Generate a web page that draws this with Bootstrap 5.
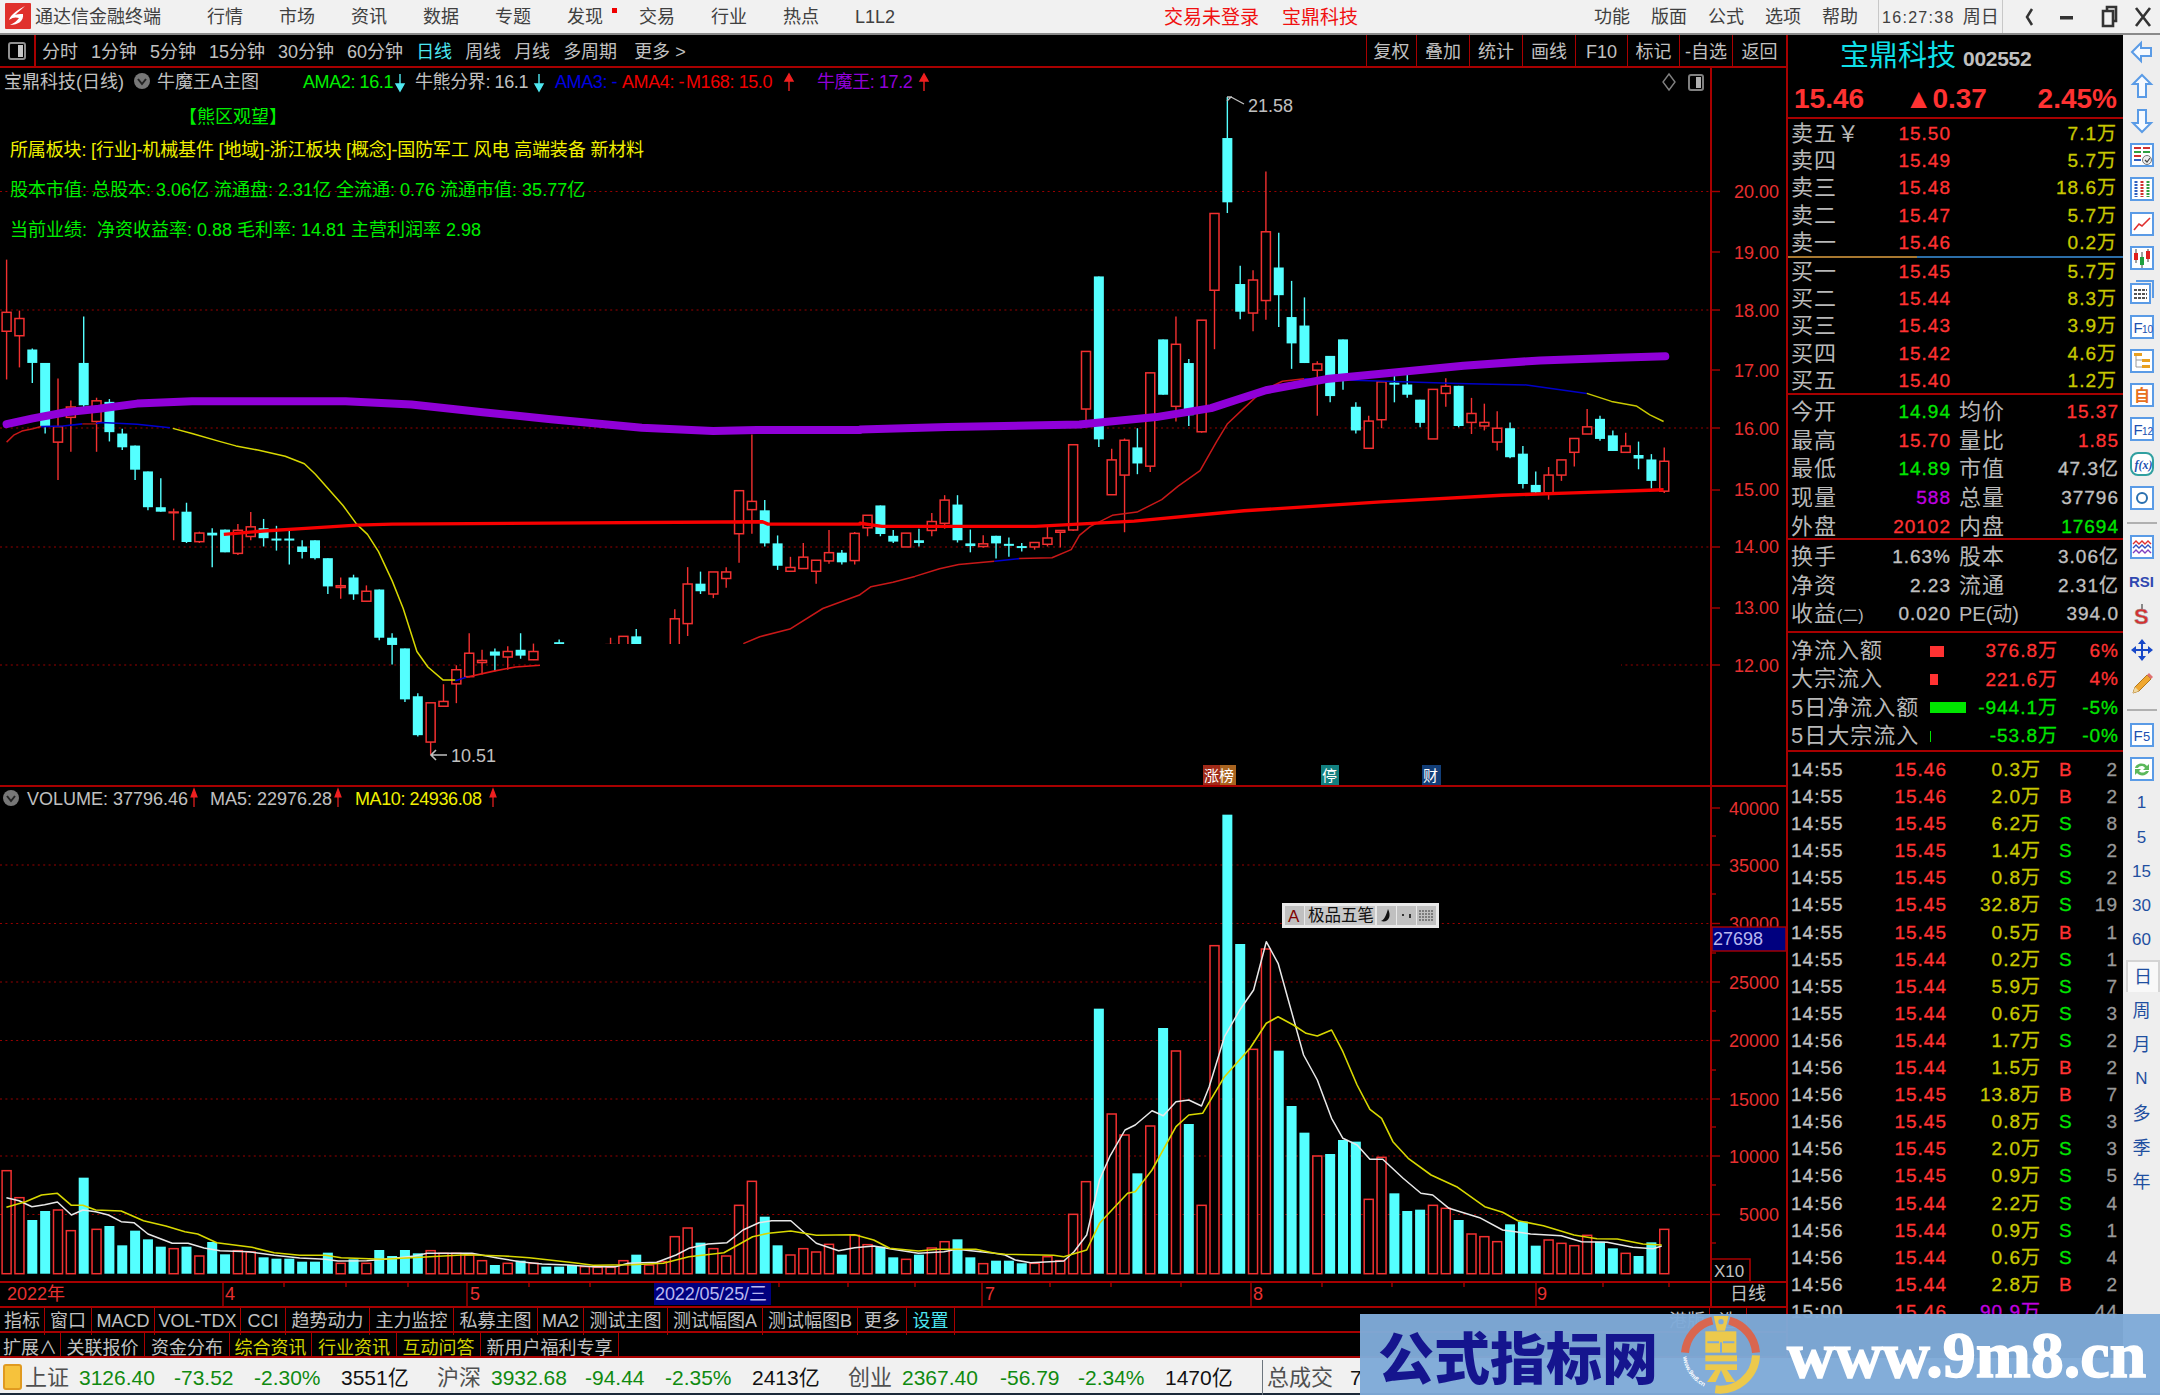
<!DOCTYPE html>
<html lang="zh-CN">
<head>
<meta charset="UTF-8">
<title>通达信金融终端</title>
<link href="https://cdn.jsdelivr.net/npm/bootstrap@5.3.3/dist/css/bootstrap.min.css" rel="stylesheet">
<style>
  body { margin:0; background:#000; font-family:"Liberation Sans","Noto Sans CJK SC",sans-serif; font-size:18px; color:#c0c0c0; }
  .td-app { width:2160px; height:1395px; overflow:hidden; position:relative; }

  /* title bar */
  .td-top { height:35px; background:#f1f1f1; border-bottom:2px solid #8a8a8a; color:#404040; line-height:35px; white-space:nowrap; }
  .td-logo { margin:3px 4px 0 5px; }
  .td-menu { margin-left:46px; gap:36px; }
  .td-menu span { position:relative; }
  .td-dot { position:absolute; left:45px; top:8px; width:5px; height:5px; background:#f00000; }
  .td-login { margin-left:269px; gap:23px; color:#f01010; font-size:19px; }
  .td-sys { gap:21px; margin-right:20px; }
  .td-clock { width:125px; border:solid #c8c8c8; border-width:0 1px; padding-left:3px; }
  .td-clock b { font-weight:400; font-size:16px; letter-spacing:1.3px; margin-right:8px; }
  .td-win { width:157px; }

  .td-mid { height:1323px; }
  .td-left { width:1786px; }

  /* period toolbar */
  .td-bar { height:33px; border-bottom:2px solid #a80000; line-height:35px; white-space:nowrap; }
  .td-switch { width:36px; height:31px; border-right:2px solid #a80000; margin-right:6px; }
  .td-periods { gap:13px; }
  .td-more { margin-left:4px; }
  .td-cyan { color:#4ce6f0; }
  .td-tools { display:grid; grid-template-columns:50px 53px 53px 53px 52px 52px 53px 54px; text-align:center; }
  .td-tools span { border-left:1px solid #a80000; height:31px; }

  .td-chart { display:block; width:1786px; height:1238px; }
  .td-chart text { font-family:"Liberation Sans","Noto Sans CJK SC",sans-serif; font-size:18px; }
  .t-red { fill:#e83030; } .t-gray { fill:#c0c0c0; } .t-green { fill:#00ee00; } .t-yel { fill:#f0f000; }
  .t-blue { fill:#0000e0; } .t-pur { fill:#9000d8; } .t-rr { fill:#f00000; }
  .t-wht { fill:#fff; }
  .t-tight { letter-spacing:-.4px; }
  .t-narrow { letter-spacing:-.15px; }
  .td-grid { stroke:#980000; stroke-width:1.2; stroke-dasharray:2 3.4; }
  .td-rl { stroke:#a80000; stroke-width:2; }

  /* indicator tabs */
  .td-tabs { display:grid; border-top:2px solid #a80000; white-space:nowrap; text-align:center; }
  .td-tabs span { border-right:1px solid #a80000; }
  .td-tabs1 { height:25px; line-height:27px; grid-template-columns:45px 47px 63px 86px 45px 84px 84px 84px 46px 84px 95px 95px 49px 48px 710px 45px 37px; }
  .td-tabs2 { height:27px; line-height:30px; grid-template-columns:61px 84px 85px 82px 85px 84px 138px; border-bottom:2px solid #a80000; }
  .td-ylw { color:#d0d000; }

  /* quote panel */
  .td-quote { width:337px; border-left:2px solid #a80000; overflow:hidden; }
  .td-name { height:45px; padding-left:52px; line-height:42px; white-space:nowrap; }
  .td-name b { font-weight:400; color:#10e0e8; font-size:29px; }
  .td-name i { font-style:normal; font-weight:700; font-size:21px; margin-left:7px; letter-spacing:-.3px; color:#c0c0c0; }
  .td-price { height:39px; border-bottom:2px solid #a80000; padding:0 6px 0 6px; font-weight:700; font-size:28px; line-height:37px; color:#ff3232; }
  .td-price span:nth-child(2) { margin-left:-10px; }
  .td-sec { padding:0 6px 0 3px; }
  .td-lab { font-size:22px; letter-spacing:1px; color:#b8b8b8; }
  .td-lab small { font-size:16px; letter-spacing:0; }
  .td-lab2 { padding-left:8px; }
  .td-pe { font-size:20px; letter-spacing:0; }
  .td-num { font-size:19px; letter-spacing:1px; text-align:right; -webkit-text-stroke:.3px currentColor; }
  .td-depth { display:grid; grid-template-columns:70px 90px 1fr; height:27.2px; line-height:27px; white-space:nowrap; }
  .td-sells { height:137px; padding-top:1px; }
  .td-split { height:2px; background:linear-gradient(90deg,#a87830 0 129px,#2c6ea8 129px); }
  .td-buys { height:137px; border-bottom:2px solid #a80000; }
  .td-stats { display:grid; grid-template-columns:70px 90px 62px 1fr; line-height:28px; white-space:nowrap; }
  .td-s1 { height:145px; border-bottom:2px solid #a80000; grid-auto-rows:28.7px; padding-right:4px; padding-top:3px; overflow:hidden; }
  .td-s2 { height:93px; border-bottom:2px solid #a80000; grid-auto-rows:28.5px; padding-right:4px; padding-top:3px; }
  .td-flow { height:119px; border-bottom:2px solid #a80000; padding:4px 4px 0 3px; display:grid; grid-template-columns:139px 128px 1fr; grid-auto-rows:28.4px; line-height:28px; white-space:nowrap; overflow:hidden; }
  .td-fbar { height:11px; flex:none; }
  .td-ticks { padding:4px 5px 0 3px; }
  .td-tick { display:grid; grid-template-columns:60px 96px 94px 30px 1fr; height:27.1px; line-height:27px; }
  .td-tick div:nth-child(4) { padding-left:18px; font-size:19px; }
  .c-r { color:#ff3232; } .c-g { color:#00e600; } .c-y { color:#c8c800; } .c-w { color:#c0c0c0; } .c-m { color:#c000e0; } .c-d { color:#989898; }

  /* tool strip on the far right */
  .td-side { width:37px; background:#eeeeee; }
  .td-si { height:34.3px; color:#1f4fa0; font-size:17px; line-height:34px; }
  .td-si svg { display:block; }
  .td-cn { font-size:18px; }
  .td-sep { height:2px; width:30px; margin:6.5px auto 6.5px; background:#b0b0b0; }
  .td-sep2 { margin:7px auto 7px; }
  .td-rsi { color:#3048b0; font-size:15px; }
  .td-on { background:#f8f8f8; border:2px solid #d4d4d4; border-bottom:0; margin-left:3px; width:34px; height:32px; margin-top:2px; margin-bottom:2px; line-height:30px; }

  /* index ticker */
  .td-status { height:37px; background:#f1f1f1; border-bottom:2px solid #1c2a3a; color:#505050; line-height:35px; padding-top:3px; white-space:nowrap; display:flex; align-items:center; }
  .td-status span { flex:none; }
  .td-up { font-size:21px; color:#108a10; }
  .td-amt { font-size:21px; color:#111; }
  .td-idx { font-size:22px; color:#505050; }
  .td-oc { width:19px; height:26px; margin:0 3px 0 3px; background:#f6c23c; border:2px solid #e09a20; border-radius:3px; }

  /* site banner lying over the bottom right corner */
  .td-banner { position:absolute; left:1360px; top:1314px; width:800px; height:81px; background:rgba(127,170,216,.97); white-space:nowrap; }
  .td-bn { color:#15158e; font-family:"Noto Sans CJK SC",sans-serif; font-weight:900; font-size:56px; line-height:78px; margin-left:18px; width:285px; flex:none; }
  .td-mark { margin-left:18px; }
  .td-url { color:#fff; font-family:"Liberation Serif",serif; font-weight:700; font-size:66px; line-height:74px; -webkit-text-stroke:1.5px #fff; margin-left:26px; }
</style>
</head>
<body>
<div class="td-app d-flex flex-column">

  <!-- title bar -->
  <div class="td-top d-flex flex-shrink-0">
    <svg class="td-logo flex-shrink-0" width="26" height="26" viewBox="0 0 26 26"><rect width="26" height="26" rx="1" fill="#e0312c"/><path d="M20 3 C13 7 6 11 4 17 C8 14 11 14 14 15 C12 18 9 20 5 22 C13 22 19 18 18 11 C14 11 12 11 10 12 C13 9 17 6 20 3Z" fill="#fff"/></svg>
    <span>通达信金融终端</span>
    <div class="td-menu d-flex">
      <span>行情</span><span>市场</span><span>资讯</span><span>数据</span><span>专题</span>
      <span>发现<i class="td-dot"></i></span><span>交易</span><span>行业</span><span>热点</span><span>L1L2</span>
    </div>
    <div class="td-login d-flex"><span>交易未登录</span><span>宝鼎科技</span></div>
    <div class="td-sys d-flex ms-auto"><span>功能</span><span>版面</span><span>公式</span><span>选项</span><span>帮助</span></div>
    <div class="td-clock flex-shrink-0"><b>16:27:38</b>周日</div>
    <svg class="td-win flex-shrink-0" height="33" viewBox="0 0 157 33"><path d="M29 9 L24 17 L29 25" fill="none" stroke="#333" stroke-width="2.5"/><rect x="57" y="16" width="13" height="3.5" fill="#333"/><path d="M100 11 V26 H110 V11 Z M104 11 V7 H113 V21 H110" fill="none" stroke="#333" stroke-width="2.6"/><path d="M133 8 L147 26 M147 8 L133 26" stroke="#333" stroke-width="2.6"/></svg>
  </div>

  <div class="td-mid d-flex flex-shrink-0">
    <div class="td-left flex-shrink-0">
      <!-- period toolbar -->
      <div class="td-bar d-flex">
        <div class="td-switch d-flex align-items-center justify-content-center flex-shrink-0">
          <svg width="18" height="18" viewBox="0 0 18 18"><rect x="1" y="1" width="16" height="16" rx="2" fill="none" stroke="#909090" stroke-width="2"/><rect x="10" y="3" width="5" height="12" fill="#c8c8c8"/></svg>
        </div>
        <div class="td-periods d-flex">
          <span>分时</span><span>1分钟</span><span>5分钟</span><span>15分钟</span><span>30分钟</span><span>60分钟</span>
          <span class="td-cyan">日线</span><span>周线</span><span>月线</span><span>多周期</span><span class="td-more">更多 &gt;</span>
        </div>
        <div class="td-tools ms-auto">
          <span>复权</span><span>叠加</span><span>统计</span><span>画线</span><span>F10</span><span>标记</span><span>-自选</span><span>返回</span>
        </div>
      </div>

      <!-- chart canvas, coordinates are screen pixels -->
      <svg class="td-chart" viewBox="0 68 1786 1238" xmlns="http://www.w3.org/2000/svg">
        <g id="grid"></g>
        <g id="candles"></g>
        <g id="lines" fill="none" stroke-linejoin="round"></g>
        <rect x="540" y="644" width="1081" height="36" fill="#000"/>
        <g id="bars"></g>
        <g id="vlines" fill="none" stroke-linejoin="round"></g>

        <!-- frame -->
        <line class="td-rl" x1="1711" y1="68" x2="1711" y2="1306"/>
        <line class="td-rl" x1="0" y1="786" x2="1786" y2="786"/>
        <line class="td-rl" x1="0" y1="1282" x2="1786" y2="1282"/>
        <g id="ticks" stroke="#a80000" stroke-width="1.4"></g>

        <!-- main legend -->
        <text x="4" y="88" class="t-gray">宝鼎科技(日线)</text>
        <circle cx="142" cy="81" r="8" fill="#777"/><path d="M138 79 L142 84 L146 79" fill="none" stroke="#222" stroke-width="2"/>
        <text x="157" y="88" class="t-gray">牛魔王A主图</text>
        <text x="303" y="88" class="t-green t-tight">AMA2: 16.1</text>
        <path d="M400 74 V88 M396 84 L400 91 L404 84Z" stroke="#50e8f0" fill="#50e8f0" stroke-width="1.4"/>
        <text x="415" y="88" class="t-gray t-tight">牛熊分界: 16.1</text>
        <path d="M539 74 V88 M535 84 L539 91 L543 84Z" stroke="#50e8f0" fill="#50e8f0" stroke-width="1.4"/>
        <text x="555" y="88" class="t-blue t-tight">AMA3: -</text>
        <text x="622" y="88" class="t-rr t-tight">AMA4: -</text>
        <text x="686" y="88" class="t-rr t-tight">M168: 15.0</text>
        <path d="M789 91 V78 M785 81 L789 74 L793 81Z" stroke="#f02020" fill="#f02020" stroke-width="1.4"/>
        <text x="817" y="88" class="t-pur t-tight">牛魔王: 17.2</text>
        <path d="M924 91 V78 M920 81 L924 74 L928 81Z" stroke="#f02020" fill="#f02020" stroke-width="1.4"/>

        <text x="179" y="123" fill="#00ee00">【熊区观望】</text>
        <text x="10" y="156" class="t-yel t-narrow">所属板块: [行业]-机械基件 [地域]-浙江板块 [概念]-国防军工 风电 高端装备 新材料</text>
        <text x="10" y="196" class="t-green">股本市值: 总股本: 3.06亿 流通盘: 2.31亿 全流通: 0.76 流通市值: 35.77亿</text>
        <text x="10" y="236" class="t-green" xml:space="preserve">当前业绩:  净资收益率: 0.88 毛利率: 14.81 主营利润率 2.98</text>

        <path d="M1669 74 L1675 82 L1669 90 L1663 82Z" fill="none" stroke="#808080" stroke-width="1.4"/>
        <rect x="1689" y="75" width="14" height="15" rx="2" fill="none" stroke="#808080" stroke-width="2"/><rect x="1696" y="77" width="5" height="11" fill="#b0b0b0"/>

        <!-- high and low marks -->
        <path d="M1227 97 H1232 M1227 101 L1231 97 L1244 104" fill="none" stroke="#c0c0c0" stroke-width="1.4"/>
        <text x="1248" y="112" class="t-gray">21.58</text>
        <path d="M447 755 H431 M436 750 L431 755 L436 760" fill="none" stroke="#c0c0c0" stroke-width="1.6"/>
        <text x="451" y="762" class="t-gray">10.51</text>

        <!-- price axis -->
        <g text-anchor="end" class="t-red">
          <text x="1779" y="198">20.00</text><text x="1779" y="259">19.00</text><text x="1779" y="317">18.00</text>
          <text x="1779" y="377">17.00</text><text x="1779" y="435">16.00</text><text x="1779" y="496">15.00</text>
          <text x="1779" y="553">14.00</text><text x="1779" y="614">13.00</text><text x="1779" y="672">12.00</text>
        </g>

        <!-- signal tags -->
        <rect x="1203" y="765" width="33" height="20" fill="#a02a18"/><rect x="1220" y="765" width="16" height="20" fill="#a86420"/>
        <text x="1204" y="781" class="t-wht" style="font-size:15px">涨榜</text>
        <rect x="1321" y="765" width="18" height="20" fill="#128080"/><text x="1322" y="781" class="t-wht" style="font-size:15px">停</text>
        <rect x="1422" y="765" width="19" height="20" fill="#123e78"/><text x="1423" y="781" class="t-wht" style="font-size:15px">财</text>

        <!-- volume legend -->
        <circle cx="11" cy="798" r="8" fill="#777"/><path d="M7 796 L11 801 L15 796" fill="none" stroke="#222" stroke-width="2"/>
        <text x="27" y="805" class="t-gray">VOLUME: 37796.46</text>
        <path d="M194 807 V794 M191 797 L194 789 L197 797Z" stroke="#f02020" fill="#f02020" stroke-width="1.2"/>
        <text x="210" y="805" class="t-gray">MA5: 22976.28</text>
        <path d="M338 807 V794 M335 797 L338 789 L341 797Z" stroke="#f02020" fill="#f02020" stroke-width="1.2"/>
        <text x="355" y="805" class="t-yel t-tight">MA10: 24936.08</text>
        <path d="M493 807 V794 M490 797 L493 789 L496 797Z" stroke="#f02020" fill="#f02020" stroke-width="1.2"/>

        <!-- volume axis -->
        <g text-anchor="end" class="t-red">
          <text x="1779" y="815">40000</text><text x="1779" y="872">35000</text><text x="1779" y="930">30000</text>
          <text x="1779" y="989">25000</text><text x="1779" y="1047">20000</text><text x="1779" y="1106">15000</text>
          <text x="1779" y="1163">10000</text><text x="1779" y="1221">5000</text>
        </g>
        <rect x="1712" y="927" width="74" height="24" fill="#00007f" stroke="#a80000" stroke-width="1.4"/>
        <text x="1713" y="945" fill="#b8b8f0">27698</text>
        <path d="M1711 1259 H1750 V1282" fill="none" stroke="#a80000" stroke-width="1.6"/>
        <text x="1714" y="1277" class="t-gray" style="font-size:17px">X10</text>

        <!-- date axis -->
        <text x="7" y="1300" class="t-red">2022年</text>
        <text x="225" y="1300" class="t-red">4</text>
        <text x="470" y="1300" class="t-red">5</text>
        <rect x="654" y="1283" width="117" height="22" fill="#00007f"/>
        <text x="655" y="1300" fill="#b8b8f0" style="letter-spacing:-.1px">2022/05/25/三</text>
        <text x="985" y="1300" class="t-red">7</text>
        <text x="1253" y="1300" class="t-red">8</text>
        <text x="1537" y="1300" class="t-red">9</text>
        <text x="1730" y="1300" class="t-gray">日线</text>

        <!-- input method bar -->
        <rect x="1282" y="903" width="157" height="25" fill="#e8e8e8"/>
        <rect x="1285" y="906" width="19" height="19" fill="#c0c0c0"/><text x="1288" y="922" fill="#800000" style="font-size:17px">A</text>
        <rect x="1305" y="906" width="70" height="19" fill="#c8c8c8"/><text x="1308" y="921" fill="#111" style="font-size:16.5px">极品五笔</text>
        <rect x="1377" y="906" width="19" height="19" fill="#c0c0c0"/><path d="M1388 909 C1386 915 1385 919 1381 921 C1388 923 1392 917 1388 909Z" fill="#111"/>
        <rect x="1397" y="906" width="19" height="19" fill="#c0c0c0"/><path d="M1403 914 v2 M1410 914 v4" stroke="#111" stroke-width="1.6"/>
        <rect x="1417" y="906" width="19" height="19" fill="#c0c0c0"/><path d="M1419 911 h15 M1419 914 h15 M1419 917 h15 M1419 920 h15" stroke="#666" stroke-width="1.6" stroke-dasharray="2 1"/>
      </svg>

      <div class="td-tabs td-tabs1">
        <span>指标</span><span>窗口</span><span>MACD</span><span>VOL-TDX</span><span>CCI</span><span>趋势动力</span><span>主力监控</span><span>私募主图</span><span>MA2</span><span>测试主图</span><span>测试幅图A</span><span>测试幅图B</span><span>更多</span><span class="td-cyan">设置</span><span class="border-0"></span><span>港版</span><span>选</span>
      </div>
      <div class="td-tabs td-tabs2">
        <span>扩展∧</span><span>关联报价</span><span>资金分布</span><span class="td-ylw">综合资讯</span><span class="td-ylw">行业资讯</span><span class="td-ylw">互动问答</span><span>新用户福利专享</span>
      </div>
    </div>

    <!-- quote panel -->
    <div class="td-quote flex-shrink-0">
      <div class="td-name"><b>宝鼎科技</b><i>002552</i></div>
      <div class="td-price d-flex justify-content-between"><span>15.46</span><span>▲0.37</span><span>2.45%</span></div>

      <div class="td-sec td-sells">
        <div class="td-depth"><div class="td-lab">卖五￥</div><div class="td-num c-r">15.50</div><div class="td-num c-y">7.1万</div></div>
        <div class="td-depth"><div class="td-lab">卖四</div><div class="td-num c-r">15.49</div><div class="td-num c-y">5.7万</div></div>
        <div class="td-depth"><div class="td-lab">卖三</div><div class="td-num c-r">15.48</div><div class="td-num c-y">18.6万</div></div>
        <div class="td-depth"><div class="td-lab">卖二</div><div class="td-num c-r">15.47</div><div class="td-num c-y">5.7万</div></div>
        <div class="td-depth"><div class="td-lab">卖一</div><div class="td-num c-r">15.46</div><div class="td-num c-y">0.2万</div></div>
      </div>
      <div class="td-split"></div>
      <div class="td-sec td-buys">
        <div class="td-depth"><div class="td-lab">买一</div><div class="td-num c-r">15.45</div><div class="td-num c-y">5.7万</div></div>
        <div class="td-depth"><div class="td-lab">买二</div><div class="td-num c-r">15.44</div><div class="td-num c-y">8.3万</div></div>
        <div class="td-depth"><div class="td-lab">买三</div><div class="td-num c-r">15.43</div><div class="td-num c-y">3.9万</div></div>
        <div class="td-depth"><div class="td-lab">买四</div><div class="td-num c-r">15.42</div><div class="td-num c-y">4.6万</div></div>
        <div class="td-depth"><div class="td-lab">买五</div><div class="td-num c-r">15.40</div><div class="td-num c-y">1.2万</div></div>
      </div>

      <div class="td-sec td-stats td-s1">
        <div class="td-lab">今开</div><div class="td-num c-g">14.94</div><div class="td-lab td-lab2">均价</div><div class="td-num c-r">15.37</div>
        <div class="td-lab">最高</div><div class="td-num c-r">15.70</div><div class="td-lab td-lab2">量比</div><div class="td-num c-r">1.85</div>
        <div class="td-lab">最低</div><div class="td-num c-g">14.89</div><div class="td-lab td-lab2">市值</div><div class="td-num c-w">47.3亿</div>
        <div class="td-lab">现量</div><div class="td-num c-m">588</div><div class="td-lab td-lab2">总量</div><div class="td-num c-w">37796</div>
        <div class="td-lab">外盘</div><div class="td-num c-r">20102</div><div class="td-lab td-lab2">内盘</div><div class="td-num c-g">17694</div>
      </div>
      <div class="td-sec td-stats td-s2">
        <div class="td-lab">换手</div><div class="td-num c-w">1.63%</div><div class="td-lab td-lab2">股本</div><div class="td-num c-w">3.06亿</div>
        <div class="td-lab">净资</div><div class="td-num c-w">2.23</div><div class="td-lab td-lab2">流通</div><div class="td-num c-w">2.31亿</div>
        <div class="td-lab">收益<small>(二)</small></div><div class="td-num c-w">0.020</div><div class="td-lab td-lab2 td-pe">PE(动)</div><div class="td-num c-w">394.0</div>
      </div>
      <div class="td-flow">
        <div class="td-lab">净流入额</div><div class="td-num c-r d-flex align-items-center justify-content-between"><i class="td-fbar" style="width:14px;background:#ff3232"></i><span>376.8万</span></div><div class="td-num c-r">6%</div>
        <div class="td-lab">大宗流入</div><div class="td-num c-r d-flex align-items-center justify-content-between"><i class="td-fbar" style="width:8px;background:#ff3232"></i><span>221.6万</span></div><div class="td-num c-r">4%</div>
        <div class="td-lab">5日净流入额</div><div class="td-num c-g d-flex align-items-center justify-content-between"><i class="td-fbar" style="width:36px;background:#00e600"></i><span>-944.1万</span></div><div class="td-num c-g">-5%</div>
        <div class="td-lab">5日大宗流入</div><div class="td-num c-g d-flex align-items-center justify-content-between"><i class="td-fbar" style="width:1px;background:#00e600"></i><span>-53.8万</span></div><div class="td-num c-g">-0%</div>
      </div>
      <div class="td-ticks" id="tickList"></div>
    </div>

    <!-- tool strip -->
    <div class="td-side flex-shrink-0 text-center">
      <div class="td-si d-flex align-items-center justify-content-center"><svg width="24" height="24" viewBox="0 0 24 24"><path d="M2 12 L11 3 V8 H21 V16 H11 V21Z" fill="#f6faff" stroke="#5a9be6" stroke-width="2"/></svg></div>
      <div class="td-si d-flex align-items-center justify-content-center"><svg width="24" height="26" viewBox="0 0 24 26"><path d="M12 2 L21 11 H16 V24 H8 V11 H3Z" fill="#f6faff" stroke="#5a9be6" stroke-width="2"/></svg></div>
      <div class="td-si d-flex align-items-center justify-content-center"><svg width="24" height="26" viewBox="0 0 24 26"><path d="M12 24 L21 15 H16 V2 H8 V15 H3Z" fill="#f6faff" stroke="#5a9be6" stroke-width="2"/></svg></div>
      <div class="td-si d-flex align-items-center justify-content-center"><svg width="24" height="24" viewBox="0 0 24 24"><rect x="1" y="1" width="22" height="22" fill="#fff" stroke="#5a9be6" stroke-width="2"/><path d="M4 5h7M13 5h7" stroke="#d03030" stroke-width="2"/><path d="M4 9h7M13 9h7" stroke="#30a040" stroke-width="2"/><path d="M4 13h7" stroke="#d03030" stroke-width="2"/><path d="M4 17h7" stroke="#3060c0" stroke-width="2"/><circle cx="17" cy="17" r="4.5" fill="#eee" stroke="#777"/><path d="M15 17l2 2 3-4" fill="none" stroke="#444" stroke-width="1.2"/></svg></div>
      <div class="td-si d-flex align-items-center justify-content-center"><svg width="24" height="24" viewBox="0 0 24 24"><rect x="1" y="1" width="22" height="22" fill="#fff" stroke="#5a9be6" stroke-width="2"/><path d="M6 4v16" stroke="#3060c0" stroke-width="3" stroke-dasharray="2 1"/><path d="M12 4v16" stroke="#d03030" stroke-width="3" stroke-dasharray="2 1"/><path d="M18 4v16" stroke="#30a040" stroke-width="3" stroke-dasharray="2 1"/></svg></div>
      <div class="td-si d-flex align-items-center justify-content-center"><svg width="24" height="24" viewBox="0 0 24 24"><rect x="1" y="1" width="22" height="22" fill="#fff" stroke="#5a9be6" stroke-width="2"/><path d="M4 18 L9 12 L12 14 L20 6" fill="none" stroke="#e03030" stroke-width="1.6"/></svg></div>
      <div class="td-si d-flex align-items-center justify-content-center"><svg width="24" height="24" viewBox="0 0 24 24"><rect x="1" y="1" width="22" height="22" fill="#fff" stroke="#5a9be6" stroke-width="2"/><path d="M6 3v14M12 6v16M18 3v13" stroke="#444"/><rect x="4" y="7" width="4" height="7" fill="#e02020"/><rect x="10" y="11" width="4" height="8" fill="#20a040"/><rect x="16" y="5" width="4" height="8" fill="#e02020"/></svg></div>
      <div class="td-si d-flex align-items-center justify-content-center"><svg width="24" height="24" viewBox="0 0 24 24"><path d="M6 1H23V18" fill="none" stroke="#5a9be6" stroke-width="2"/><rect x="1" y="4" width="19" height="19" fill="#fff" stroke="#5a9be6" stroke-width="2"/><path d="M4 10h13M4 14h13M4 18h13" stroke="#555" stroke-width="2" stroke-dasharray="3 1"/></svg></div>
      <div class="td-si d-flex align-items-center justify-content-center"><svg width="24" height="24" viewBox="0 0 24 24"><rect x="1" y="1" width="22" height="22" fill="#fff" stroke="#5a9be6" stroke-width="2"/><text x="3.5" y="18" font-family="Liberation Sans" font-size="15" fill="#2050b0">F</text><text x="12" y="18" font-family="Liberation Sans" font-size="10" fill="#2050b0">10</text></svg></div>
      <div class="td-si d-flex align-items-center justify-content-center"><svg width="24" height="24" viewBox="0 0 24 24"><rect x="1" y="1" width="22" height="22" fill="#fff" stroke="#5a9be6" stroke-width="2"/><rect x="4" y="4" width="8" height="3" fill="#e8a020"/><rect x="12" y="10" width="8" height="3" fill="#e8a020"/><rect x="12" y="16" width="8" height="3" fill="#e8a020"/><path d="M6 7V18H12M6 11H12" fill="none" stroke="#999"/></svg></div>
      <div class="td-si d-flex align-items-center justify-content-center"><svg width="24" height="24" viewBox="0 0 24 24"><rect x="1" y="1" width="22" height="22" fill="#fff" stroke="#5a9be6" stroke-width="2"/><text x="4" y="18" font-family="Noto Sans CJK SC" font-weight="700" font-size="16" fill="#e87020">自</text></svg></div>
      <div class="td-si d-flex align-items-center justify-content-center"><svg width="24" height="24" viewBox="0 0 24 24"><rect x="1" y="1" width="22" height="22" fill="#fff" stroke="#5a9be6" stroke-width="2"/><text x="3.5" y="18" font-family="Liberation Sans" font-size="15" fill="#2050b0">F</text><text x="12" y="18" font-family="Liberation Sans" font-size="10" fill="#2050b0">12</text></svg></div>
      <div class="td-si d-flex align-items-center justify-content-center"><svg width="24" height="24" viewBox="0 0 24 24"><rect x="1" y="1" width="22" height="22" rx="7" fill="#fff" stroke="#30a0a0" stroke-width="2"/><text x="4.5" y="17" font-family="Liberation Serif" font-style="italic" font-weight="700" font-size="12" fill="#2050b0">f(x)</text></svg></div>
      <div class="td-si d-flex align-items-center justify-content-center"><svg width="24" height="24" viewBox="0 0 24 24"><rect x="1" y="1" width="22" height="22" fill="#fff" stroke="#5a9be6" stroke-width="2"/><circle cx="12" cy="12" r="5" fill="none" stroke="#2a70b0" stroke-width="2"/></svg></div>
      <div class="td-sep"></div>
      <div class="td-si d-flex align-items-center justify-content-center"><svg width="24" height="24" viewBox="0 0 24 24"><rect x="1" y="1" width="22" height="22" fill="#fff" stroke="#5a9be6" stroke-width="2"/><path d="M3 9l3-3 3 3 3-3 3 3 3-3 3 3" fill="none" stroke="#e03030" stroke-width="1.4"/><path d="M3 13l3-3 3 3 3-3 3 3 3-3 3 3" fill="none" stroke="#3050c0" stroke-width="1.4"/><path d="M3 18l3-3 3 3 3-3 3 3 3-3 3 3" fill="none" stroke="#8040c0" stroke-width="1.4"/></svg></div>
      <div class="td-si td-rsi d-flex align-items-center justify-content-center fw-bold">RSI</div>
      <div class="td-si d-flex align-items-center justify-content-center"><svg width="24" height="26" viewBox="0 0 24 26"><text x="4" y="21" font-family="Liberation Sans" font-weight="700" font-size="22" fill="#d83030" stroke="#999" stroke-width=".5">S</text><path d="M12 1v5" stroke="#888" stroke-width="2"/></svg></div>
      <div class="td-si d-flex align-items-center justify-content-center"><svg width="24" height="24" viewBox="0 0 24 24"><path d="M12 1l4 5h-3v5h5V8l5 4-5 4v-3h-5v5h3l-4 5-4-5h3v-5H6v3l-5-4 5-4v3h5V6H8z" fill="#1848c8"/></svg></div>
      <div class="td-si d-flex align-items-center justify-content-center"><svg width="24" height="24" viewBox="0 0 24 24"><path d="M3 21 L5 15 L17 3 L21 7 L9 19Z" fill="#f0a830" stroke="#b07820"/><path d="M3 21 L5 15 L9 19Z" fill="#f0d8a0"/><path d="M17 3 L21 7 L23 5 L19 1Z" fill="#e07070"/></svg></div>
      <div class="td-sep td-sep2"></div>
      <div class="td-si d-flex align-items-center justify-content-center"><svg width="24" height="24" viewBox="0 0 24 24"><rect x="1" y="1" width="22" height="22" fill="#fff" stroke="#5a9be6" stroke-width="2"/><text x="3.5" y="18" font-family="Liberation Sans" font-size="15" fill="#2050b0">F</text><text x="13" y="18" font-family="Liberation Sans" font-size="13" fill="#2050b0">5</text></svg></div>
      <div class="td-si d-flex align-items-center justify-content-center"><svg width="24" height="24" viewBox="0 0 24 24"><rect x="1" y="1" width="22" height="22" fill="#fff" stroke="#5a9be6" stroke-width="2"/><path d="M5 11 C6 6 14 5 17 9 L19 7 V13 H13 L15 11 C13 8 9 9 8 11Z M19 14 C17 19 10 20 7 16 L5 18 V12 H11 L9 14 C11 16 14 16 16 14Z" fill="#5cb85c"/></svg></div>
      <div class="td-si">1</div><div class="td-si">5</div><div class="td-si">15</div><div class="td-si">30</div><div class="td-si">60</div>
      <div class="td-si td-cn td-on">日</div>
      <div class="td-si td-cn">周</div><div class="td-si td-cn">月</div><div class="td-si">N</div><div class="td-si td-cn">多</div><div class="td-si td-cn">季</div><div class="td-si td-cn">年</div>
    </div>
  </div>

  <!-- index ticker -->
  <div class="td-status flex-shrink-0">
    <span class="td-oc"></span><span class="td-idx" style="width:54px">上证</span>
    <span class="td-up" style="width:95px">3126.40</span><span class="td-up" style="width:80px">-73.52</span><span class="td-up" style="width:87px">-2.30%</span><span class="td-amt" style="width:96px">3551亿</span>
    <span class="td-idx" style="width:54px">沪深</span><span class="td-up" style="width:94px">3932.68</span><span class="td-up" style="width:80px">-94.44</span><span class="td-up" style="width:87px">-2.35%</span><span class="td-amt" style="width:96px">2413亿</span>
    <span class="td-idx" style="width:54px">创业</span><span class="td-up" style="width:98px">2367.40</span><span class="td-up" style="width:78px">-56.79</span><span class="td-up" style="width:87px">-2.34%</span><span class="td-amt" style="width:97px">1470亿</span>
    <span class="td-idx border-start border-secondary ps-1" style="width:88px">总成交</span><span class="td-amt">7</span>
  </div>

  <!-- site banner -->
  <div class="td-banner d-flex align-items-center">
    <span class="td-bn">公式指标网</span>
    <svg class="td-mark flex-shrink-0 align-self-start" width="80" height="81" viewBox="62 12 240 243">
      <path d="M74 128 A108 108 0 0 1 156 32" fill="none" stroke="#d9664f" stroke-width="24"/>
      <path d="M207 32 A108 108 0 0 1 287 128" fill="none" stroke="#d9664f" stroke-width="24"/>
      <path d="M287 136 A108 108 0 0 1 165 238" fill="none" stroke="#ecc94c" stroke-width="24"/>
      <path id="wmArc" d="M68 140 A115 115 0 0 0 160 240" fill="none"/>
      <text font-size="19" fill="#fff" font-family="Liberation Sans" font-weight="700"><textPath href="#wmArc">www.9m8.cn</textPath></text>
      <path d="M160 18 H205 L194 62 H170Z" fill="#ecc94c"/><circle cx="182" cy="35" r="8" fill="#7faad8"/>
      <rect x="135" y="64" width="93" height="64" fill="#ecc94c"/>
      <path d="M141 97 H176 M188 97 H222 M182 97 V128" stroke="#7faad8" stroke-width="6"/>
      <rect x="135" y="136" width="95" height="18" fill="#ecc94c"/>
      <rect x="135" y="163" width="95" height="17" fill="#ecc94c"/>
      <path d="M165 180 L140 216 H166 L182 180 L198 216 H225 L200 180Z" fill="#ecc94c"/>
    </svg>
    <span class="td-url">www.9m8.cn</span>
  </div>
</div>

<script>
  // price candles, read off the picture: [index, type, body top, body bottom, high, low]
  const left = [
    [0,'r',210,265,57,405],[1,'r',228,278,205,370],[2,'c',318,357,315,415],[3,'c',357,542,357,562],
    [4,'r',542,587,402,697],[5,'r',485,515,466,615],[6,'c',357,480,222,490],[7,'r',467,527,458,615],
    [8,'c',470,558,462,585],[9,'c',562,602,548,610],[10,'c',597,667,597,697],[11,'c',672,776,672,785],
    [12,'c',776,789,692,789],[13,'r',790,792,780,872],[14,'c',789,877,763,880],[15,'r',851,876,847,880],
    [16,'c',850,858,837,950],[17,'c',841,907,841,907],[18,'r',843,910,825,915],[19,'r',833,861,790,872],
    [20,'c',837,866,810,890],[21,'c',867,871,830,902],[22,'c',867,871,845,942],[23,'c',890,906,872,925],
    [24,'c',872,924,872,928],[25,'c',924,1006,924,1028],[26,'r',1004,1009,980,1042],[27,'c',980,1029,972,1045],
    [28,'r',1020,1049,1003,1050],[29,'c',1015,1155,1015,1162],[30,'c',1155,1176,1142,1233],[31,'c',1186,1334,1186,1342],
    [32,'c',1325,1438,1316,1442],[33,'r',1344,1458,1344,1495],[34,'r',1340,1354,1290,1354],[35,'r',1248,1289,1235,1345],
    [36,'r',1200,1268,1142,1270],[37,'r',1221,1227,1190,1262],[38,'c',1195,1207,1186,1252],[39,'r',1195,1211,1180,1248],
    [40,'c',1190,1207,1142,1216],[41,'r',1195,1219,1172,1220],[43,'c',1168,1200,1160,1200],[47,'r',1175,1200,1155,1200],
    [48,'r',1151,1200,1151,1200],[49,'c',1151,1200,1130,1200],[52,'r',1100,1200,1072,1200],[53,'r',999,1114,950,1150],
    [54,'c',998,1020,963,1028],[55,'r',964,1028,964,1040],[56,'r',964,983,950,1010],[57,'r',728,853,728,937],
    [58,'r',759,783,565,853],[59,'c',785,881,755,890],[60,'c',881,946,858,958],[61,'r',951,962,920,962],
    [62,'r',921,954,880,954],[63,'r',930,962,930,998],[64,'r',908,932,842,940],[65,'c',908,936,900,942],
    [66,'r',852,931,848,942]
  ];
  const right = [
    [67,'r',975,1003,975,1022],[68,'c',953,1017,953,1022],[69,'c',1021,1034,1008,1037],[70,'r',1015,1046,1015,1046],
    [71,'c',1031,1037,1005,1045],[72,'r',989,1009,970,1022],[73,'r',941,993,930,1005],[74,'c',951,1031,930,1036],
    [75,'c',1038,1044,1007,1058],[76,'r',1039,1045,1020,1048],[77,'c',1021,1038,1021,1072],[78,'c',1039,1043,1025,1068],
    [79,'c',1044,1046,1037,1056],[80,'r',1036,1046,1036,1052],[81,'r',1026,1040,1000,1045],[82,'r',1009,1013,1009,1047],
    [83,'r',817,1008,817,1010],[84,'r',608,737,608,770],[85,'c',440,805,440,822],[86,'r',851,929,826,929],
    [87,'r',807,885,803,1013],[88,'c',823,859,780,883],[89,'r',656,865,656,878],[90,'c',581,705,581,705],
    [91,'r',592,731,530,765],[92,'c',634,751,625,775],[93,'r',538,788,538,790],[94,'r',299,471,299,603],
    [95,'c',130,274,38,298],[96,'c',457,519,416,536],[97,'r',448,522,426,563],[98,'r',340,494,205,537],
    [99,'c',420,482,342,553],[100,'c',531,590,450,647],[101,'c',550,634,487,634],[102,'r',636,650,630,752],
    [103,'c',618,708,618,722],[104,'c',581,665,581,694],[105,'c',732,785,722,792],[106,'r',764,825,752,825],
    [107,'r',676,761,676,780],[108,'c',678,681,660,722],[109,'c',682,705,660,712],[110,'c',716,768,716,778],
    [111,'r',693,804,693,804],[112,'r',686,702,668,732],[113,'c',685,775,685,778],[114,'r',747,767,712,793],
    [115,'r',767,775,725,785],[116,'r',780,811,742,830],[117,'c',780,845,767,847],[118,'c',837,905,820,915],
    [119,'c',907,924,877,926],[120,'r',885,925,867,940],[121,'r',851,885,851,898],[122,'r',803,834,803,866],
    [123,'r',777,793,737,793],[124,'c',759,804,752,808],[125,'c',796,831,785,831],[126,'r',820,834,790,834],
    [127,'c',840,848,810,872],[128,'c',850,898,838,915],[129,'r',854,921,823,925]
  ];
  const barX = i => 6.6 + 12.85 * i;
  const leftY = z => 240 + z / 2.904, rightY = z => 80 + z / 2.24;
  const RED = '#f23030', CYAN = '#54ffff';

  function candle(c, toY) {
    const x = barX(c[0]), top = toY(c[2]), bot = toY(c[3]), hi = toY(c[4]), lo = toY(c[5]);
    const col = c[1] === 'r' ? RED : CYAN;
    let s = `<line x1="${x}" x2="${x}" y1="${hi}" y2="${lo}" stroke="${col}" stroke-width="1.4"/>`;
    if (c[1] === 'r') s += `<rect x="${x-4.5}" y="${top}" width="9" height="${bot-top}" fill="#000" stroke="${RED}" stroke-width="1.5"/>`;
    else s += `<rect x="${x-5}" y="${top}" width="10" height="${Math.max(bot-top,2)}" fill="${CYAN}"/>`;
    return s;
  }
  document.getElementById('candles').innerHTML = left.map(c => candle(c, leftY)).join('') + right.map(c => candle(c, rightY)).join('');

  function poly(pts, toX, toY, col, w, cap) {
    const p = pts.map(a => toX(a[0]).toFixed(1) + ',' + toY(a[1]).toFixed(1)).join(' ');
    return `<polyline points="${p}" stroke="${col}" stroke-width="${w}"${cap ? ' stroke-linecap="round"' : ''}/>`;
  }
  const lx = z => z / 1.823, rx = z => 860 + z / 1.823;
  const both = (a, b, col, w, cap) => {
    const p = a.map(q => [lx(q[0]), leftY(q[1])]).concat(b.map(q => [rx(q[0]), rightY(q[1])]));
    return poly(p, v => v, v => v, col, w, cap);
  };
  let ln = '';
  // moving average, changes colour by trend
  ln += poly([[12,587],[25,567],[40,555],[60,548],[75,542]], lx, leftY, '#c81818', 1.5);
  ln += poly([[75,542],[115,540],[150,534]], lx, leftY, '#0000d0', 1.6);
  ln += poly([[150,534],[175,534]], lx, leftY, '#8a1010', 1.6);
  ln += poly([[175,533],[185,530],[250,535],[310,545]], lx, leftY, '#0000d0', 1.6);
  ln += poly([[315,547],[350,562],[400,585],[430,598],[470,610],[520,628],[555,650],[575,680],[600,725],[625,770],[650,825],[670,855],[690,905],[715,990],[735,1070],[760,1195],[780,1240],[808,1278],[830,1278]], lx, leftY, '#d8d800', 1.5);
  ln += poly([[830,1280],[850,1270]], lx, leftY, '#0000d0', 1.6);
  ln += poly([[850,1270],[900,1252],[940,1240],[985,1235]], lx, leftY, '#e01818', 1.6);
  ln += both([[1355,1172],[1385,1152],[1440,1130],[1500,1070],[1568,1030]], [[0,1153],[20,1135],[60,1125],[100,1112],[145,1095],[180,1085],[245,1078]], '#c81818', 1.5);
  ln += poly([[245,1078],[290,1072]], rx, rightY, '#0000d0', 1.6);
  ln += poly([[290,1072],[350,1070],[385,1052],[400,1020],[420,1000],[460,975],[505,968],[550,940],[580,910],[620,875],[650,810],[670,770],[700,735],[735,695],[770,675],[810,669]], rx, rightY, '#c81818', 1.5);
  ln += poly([[810,669],[960,675],[1090,680],[1215,683],[1325,702]], rx, rightY, '#0000c8', 1.5);
  ln += poly([[1325,702],[1370,720],[1415,730],[1440,750],[1465,765]], rx, rightY, '#c8c800', 1.5);
  // purple band and red band
  ln += both([[12,535],[60,518],[120,500],[180,490],[250,475],[350,468],[630,468],[750,478],[880,500],[1000,520],[1170,545],[1300,555],[1380,552],[1568,552]],
             [[0,783],[160,777],[400,772],[540,755],[640,735],[740,695],[850,670],[960,657],[1100,640],[1240,628],[1380,622],[1468,619]], '#9000d8', 8, true);
  ln += both([[408,855],[480,845],[550,838],[650,828],[715,825],[1000,822],[1390,818],[1400,825],[1568,825]],
             [[0,993],[40,1000],[320,1000],[500,988],[700,965],[950,945],[1170,930],[1300,925],[1465,918]], '#f80000', 3.4);
  document.getElementById('lines').innerHTML = ln;

  // dotted grid and axis ticks
  let g = '';
  [191.5,310,428,547,665].forEach(y => g += `<line class="td-grid" x1="0" x2="1711" y1="${y}" y2="${y}"/>`);
  [865,923.5,982,1040.5,1099,1156,1214.5].forEach(y => g += `<line class="td-grid" x1="0" x2="1711" y1="${y}" y2="${y}"/>`);
  document.getElementById('grid').innerHTML = g;
  let t = '';
  [191.5,252,310,370,428,490,547,608,665,808,865,923.5,982,1040.5,1099,1156,1214.5].forEach(y => t += `<line x1="1711" x2="1720" y1="${y}" y2="${y}"/>`);
  [836,894,953,1011,1070,1127,1185,1243].forEach(y => t += `<line x1="1711" x2="1716" y1="${y}" y2="${y}"/>`);
  [284,346,408,529,590,779,848,915,1050,1111,1181,1322,1392,1464,1603,1669].forEach(x => t += `<line x1="${x}" x2="${x}" y1="1282" y2="1287"/>`);
  [223,467,982,1251,1536].forEach(x => t += `<line x1="${x}" x2="${x}" y1="1282" y2="1306"/>`);
  document.getElementById('ticks').innerHTML = t;

  // volume bars: top of each bar as read, in crop units of 3 per pixel
  const tops = [1172,1253,1320,1293,1290,1352,1193,1348,1338,1396,1352,1378,1400,1406,1400,1428,1386,1423,1412,1416,
    1432,1436,1436,1445,1445,1418,1450,1438,1450,1410,1428,1410,1420,1412,1420,1420,1425,1442,1455,1450,
    1442,1450,1460,1460,1455,1460,1462,1462,1442,1424,1455,1445,1370,1344,1388,1406,1428,1276,1204,1310,
    1396,1425,1406,1416,1393,1424,1366,1394,1400,1432,1438,1424,1404,1385,1378,1432,1451,1442,1442,1450,
    1450,1430,1442,1303,1205,686,1002,1065,1180,1038,744,813,1032,1276,497,104,492,808,507,812,
    978,1058,1128,1122,1080,1085,1258,1132,1240,1293,1289,1276,1285,1320,1362,1370,1385,1333,1325,1397,
    1380,1390,1397,1366,1385,1405,1420,1428,1387,1348];
  const kinds = 'rrccrrcrcc'+'cccrcrccrr'+'ccccccrcrc'+'cccrrrrrcr'+'crcccrrrrc'+'rrrrcrrrrc'+'crrrrcrrcc'+'rcrrccrccc'+'rrrrrcrrcr'+'crcrrccrrc'+'ccrcccrrcc'+'crrcrrrccc'+'rrrrccrccr';
  const volY = z => 780 + z / 3;
  document.getElementById('bars').innerHTML = tops.map((z, i) => {
    const x = barX(i), y = volY(z), h = 1273.7 - y;
    return kinds[i] === 'r'
      ? `<rect x="${x-4.5}" y="${y}" width="9" height="${h}" fill="#000" stroke="${RED}" stroke-width="1.5"/>`
      : `<rect x="${x-5}" y="${y}" width="10" height="${h}" fill="${CYAN}"/>`;
  }).join('');

  const vl = z => z / 1.568, vr = z => 1000 + z / 1.96;
  const vol = (a, b, col, w) => {
    const p = a.map(q => [vl(q[0]), volY(q[1])]).concat(b.map(q => [vr(q[0]), volY(q[1])]));
    return poly(p, v => v, v => v, col, w);
  };
  document.getElementById('vlines').innerHTML =
    vol([[10,1253],[30,1262],[50,1280],[70,1274],[90,1266],[112,1305],[130,1290],[150,1295],[170,1305],[190,1325],[210,1328],[232,1362],[270,1390],[295,1390],[320,1404],[345,1412],[390,1415],[430,1426],[470,1434],[510,1438],[530,1443],[575,1442],[610,1436],[650,1428],[670,1420],[740,1420],[780,1434],[815,1445],[850,1452],[890,1455],[930,1460],[965,1460],[985,1450],[1030,1447],[1060,1425],[1080,1405],[1110,1392],[1140,1388],[1165,1350],[1190,1328],[1210,1322],[1240,1322],[1280,1390],[1315,1412],[1340,1403],[1370,1398],[1400,1408],[1440,1420],[1480,1415],[1500,1408],[1560,1420]],
        [[10,1425],[30,1440],[60,1448],[125,1443],[145,1415],[170,1365],[195,1200],[215,1130],[245,1050],[265,1035],[298,992],[320,1007],[345,965],[370,960],[395,978],[410,920],[440,770],[470,690],[497,630],[522,485],[545,550],[565,660],[595,825],[622,900],[650,1015],[672,1075],[700,1095],[725,1138],[750,1138],[790,1195],[825,1240],[848,1245],[880,1285],[940,1313],[985,1350],[1040,1362],[1100,1367],[1140,1385],[1190,1387],[1240,1402],[1280,1406],[1297,1398]], '#e8e8e8', 1.5) +
    vol([[10,1282],[40,1265],[65,1245],[90,1240],[112,1276],[130,1276],[150,1290],[190,1293],[225,1322],[260,1338],[290,1355],[310,1362],[340,1388],[395,1402],[430,1418],[470,1426],[510,1426],[535,1433],[600,1438],[660,1432],[730,1424],[790,1428],[830,1433],[900,1448],[930,1456],[990,1454],[1040,1450],[1080,1430],[1135,1418],[1180,1370],[1205,1360],[1240,1353],[1280,1366],[1340,1364],[1370,1380],[1395,1405],[1440,1413],[1470,1408],[1530,1408],[1560,1420]],
        [[10,1423],[105,1426],[125,1430],[170,1410],[195,1330],[250,1240],[265,1235],[298,1170],[345,1040],[370,1005],[397,1000],[440,890],[490,805],[522,730],[545,710],[575,735],[600,760],[622,768],[650,750],[672,815],[700,915],[725,988],[748,1015],[770,1085],[800,1135],[845,1185],[895,1220],[950,1280],[985,1297],[1015,1322],[1065,1337],[1125,1365],[1170,1376],[1210,1377],[1260,1392],[1297,1395]], '#d8d800', 1.6);

  // tick by tick list
  const deals = [
    ['14:55','15.46','0.3','B','2'],['14:55','15.46','2.0','B','2'],['14:55','15.45','6.2','S','8'],['14:55','15.45','1.4','S','2'],
    ['14:55','15.45','0.8','S','2'],['14:55','15.45','32.8','S','19'],['14:55','15.45','0.5','B','1'],['14:55','15.44','0.2','S','1'],
    ['14:55','15.44','5.9','S','7'],['14:55','15.44','0.6','S','3'],['14:56','15.44','1.7','S','2'],['14:56','15.44','1.5','B','2'],
    ['14:56','15.45','13.8','B','7'],['14:56','15.45','0.8','S','3'],['14:56','15.45','2.0','S','3'],['14:56','15.45','0.9','S','5'],
    ['14:56','15.44','2.2','S','4'],['14:56','15.44','0.9','S','1'],['14:56','15.44','0.6','S','4'],['14:56','15.44','2.8','B','2'],
    ['15:00','15.46','90.9','','44']
  ];
  document.getElementById('tickList').innerHTML = deals.map(d => `
    <div class="td-tick td-num">
      <div class="c-w text-start">${d[0]}</div>
      <div class="c-r">${d[1]}</div>
      <div class="${d[3] ? 'c-y' : 'c-m'}">${d[2]}万</div>
      <div class="text-start ${d[3] === 'B' ? 'c-r' : 'c-g'}">${d[3]}</div>
      <div class="c-d">${d[4]}</div>
    </div>`).join('');
</script>
</body>
</html>
